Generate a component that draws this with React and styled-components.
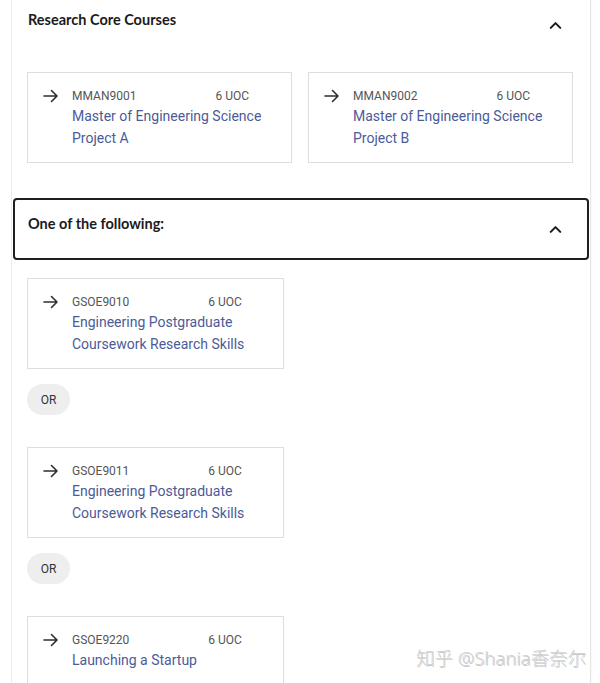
import React from "react";
import styled, { createGlobalStyle } from "styled-components";
import { ChevronUp } from "lucide-react";

const GlobalStyle = createGlobalStyle`
  body {
    margin: 0;
    background: #ffffff;
    font-family: Roboto, "Noto Sans", sans-serif;
    overflow: hidden;
  }
`;

const Page = styled.div`
  position: relative;
  width: 600px;
  height: 683px;
  overflow: hidden;
`;

const Panel = styled.div`
  margin: -6px 0 0 11px;
  width: 578px;
  min-height: 720px;
  border-left: 1px solid #ececec;
  border-right: 1px solid #e6e6e6;
  box-shadow: 1px 0 2px rgba(0, 0, 0, 0.04);
  background: #fff;
`;

const Section = styled.section`
  display: flex;
  flex-direction: column;
  margin-bottom: ${(p) => p.$gap || 0}px;
`;

const Header = styled.div`
  display: flex;
  align-items: center;
  justify-content: space-between;
  height: 62px;
  box-sizing: border-box;
  margin: 0 1px;
  padding: 0 22px 0 13px;
  border: 2px solid ${(p) => (p.$focused ? "#1f1f1f" : "transparent")};
  border-radius: 4px;
`;

const Title = styled.h3`
  margin: 0 0 10px;
  font-family: Lato, "Open Sans", sans-serif;
  font-weight: 700;
  font-size: 14.5px;
  line-height: 20px;
  color: #1b1b1b;
`;

const Chevron = styled(ChevronUp)`
  color: #1b1b1b;
`;

const Grid = styled.div`
  display: grid;
  grid-template-columns: 265px 265px;
  gap: 16px;
  padding: 16px 0 0 15px;
`;

const List = styled.div`
  display: flex;
  flex-direction: column;
  align-items: flex-start;
  padding: 18px 0 0 15px;
`;

const Card = styled.div`
  display: flex;
  gap: 13px;
  box-sizing: border-box;
  width: ${(p) => p.$width || 265}px;
  min-height: 90px;
  padding: 14px 15px 13px;
  border: 1px solid #dedede;
  background: #fff;
`;

const ArrowIcon = styled.svg`
  flex: none;
  margin-top: 2px;
`;

const Info = styled.div`
  display: flex;
  flex-direction: column;
`;

const Meta = styled.div`
  display: flex;
  gap: 79px;
  font-size: 12px;
  line-height: 18px;
  color: #555;
`;

const Name = styled.a`
  font-size: 14px;
  line-height: 22px;
  color: #4b5b98;
  text-decoration: none;
`;

const Or = styled.div`
  display: flex;
  align-items: center;
  justify-content: center;
  width: 43px;
  height: 31px;
  margin: 15px 0 32px;
  border-radius: 16px;
  background: #eeeeee;
  font-size: 12px;
  color: #333;
`;

const Watermark = styled.div`
  position: absolute;
  right: 14px;
  bottom: 13px;
  font-family: "Noto Sans", "Noto Sans CJK SC", sans-serif;
  font-size: 18.5px;
  font-weight: 300;
  color: #d2d2d2;
  text-shadow: 1px 1px 0 rgba(0, 0, 0, 0.22);
`;

const Arrow = () => (
  <ArrowIcon width="16" height="14" viewBox="0 0 16 14" fill="none">
    <path
      d="M1 7h13M8.5 1.5L14 7l-5.5 5.5"
      stroke="#2e2e2e"
      strokeWidth="1.6"
      strokeLinecap="round"
      strokeLinejoin="round"
    />
  </ArrowIcon>
);

const Course = ({ code, title, width }) => (
  <Card $width={width}>
    <Arrow />
    <Info>
      <Meta>
        <span>{code}</span>
        <span>6 UOC</span>
      </Meta>
      {title.map((line) => (
        <Name key={line}>{line}</Name>
      ))}
    </Info>
  </Card>
);

const options = [
  { code: "GSOE9010", title: ["Engineering Postgraduate", "Coursework Research Skills"] },
  { code: "GSOE9011", title: ["Engineering Postgraduate", "Coursework Research Skills"] },
  { code: "GSOE9220", title: ["Launching a Startup"] },
];

export default function App() {
  return (
    <Page>
      <GlobalStyle />
      <Panel>
        <Section $gap={35}>
          <Header>
            <Title>Research Core Courses</Title>
            <Chevron size={19} strokeWidth={2.6} />
          </Header>
          <Grid>
            <Course code="MMAN9001" title={["Master of Engineering Science", "Project A"]} />
            <Course code="MMAN9002" title={["Master of Engineering Science", "Project B"]} />
          </Grid>
        </Section>
        <Section>
          <Header $focused>
            <Title>One of the following:</Title>
            <Chevron size={19} strokeWidth={2.6} />
          </Header>
          <List>
            {options.map((c, i) => (
              <React.Fragment key={c.code}>
                <Course code={c.code} title={c.title} width={257} />
                {i < options.length - 1 && <Or>OR</Or>}
              </React.Fragment>
            ))}
          </List>
        </Section>
      </Panel>
      <Watermark>知乎 @Shania香奈尔</Watermark>
    </Page>
  );
}
